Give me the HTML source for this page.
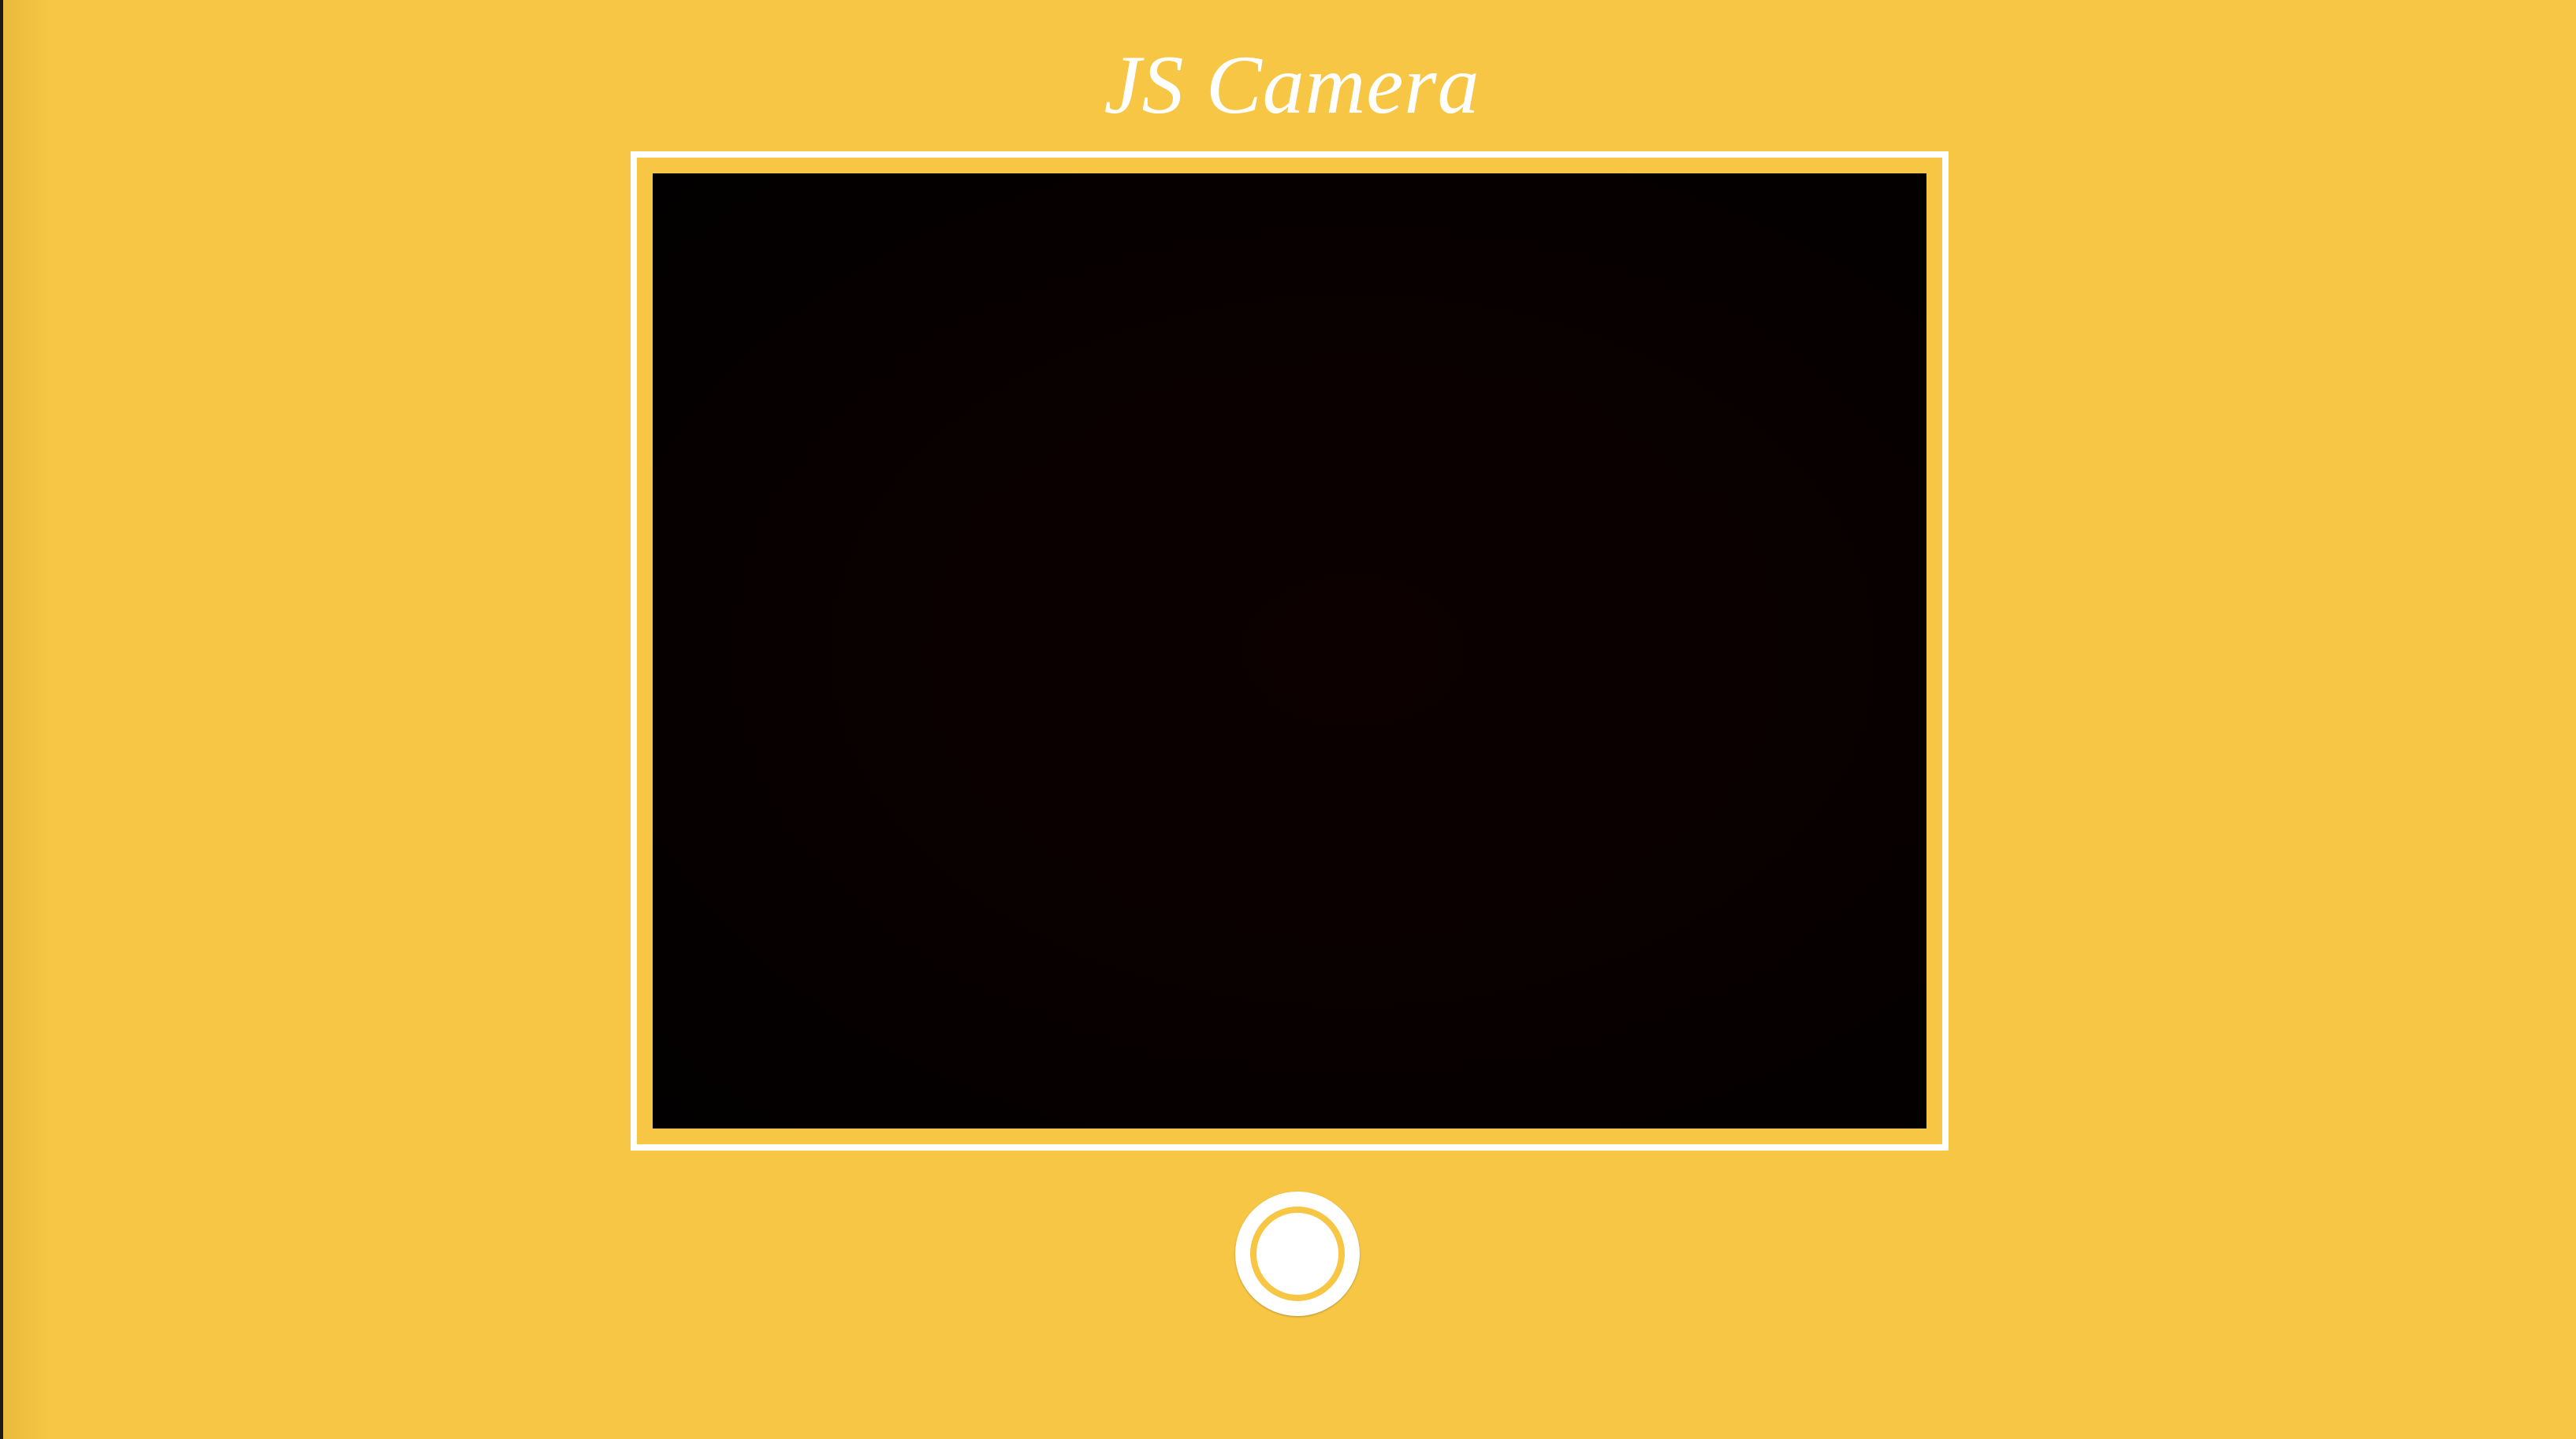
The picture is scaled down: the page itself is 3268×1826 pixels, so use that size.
<!DOCTYPE html>
<html><head><meta charset="utf-8"><style>
html,body{margin:0;padding:0}
body{width:3268px;height:1826px;background:#F6C644;position:relative;overflow:hidden;font-family:"Liberation Serif",serif}
.edge{position:absolute;left:0;top:0;width:4px;height:1826px;background:#1e1a17}
.shade{position:absolute;left:4px;top:0;width:60px;height:1826px;background:linear-gradient(90deg,rgba(200,150,40,.25),rgba(246,198,68,0))}
.title{position:absolute;left:0;width:3268px;top:48px;text-align:center;color:#fff;font-style:italic;font-size:106px;line-height:120px;letter-spacing:1px;padding-left:10px;box-sizing:border-box}
.frame{position:absolute;left:800px;top:192px;width:1656px;height:1252px;border:8px solid #fff}
.video{position:absolute;left:828px;top:220px;width:1616px;height:1212px;background:radial-gradient(ellipse at 55% 50%,#0c0000 0%,#090000 50%,#040000 85%,#020000 100%)}
.btn{position:absolute;left:1567px;top:1512px;width:158px;height:158px;border-radius:50%;background:#fff;box-shadow:0 1px 2px rgba(0,0,0,.25)}
.ring{position:absolute;left:1586px;top:1531px;width:104px;height:104px;border-radius:50%;border:8px solid #F6C644;background:#fff}
</style></head><body>
<div class="edge"></div><div class="shade"></div>
<div class="title">JS Camera</div>
<div class="frame"></div>
<div class="video"></div>
<div class="btn"></div>
<div class="ring"></div>
</body></html>
